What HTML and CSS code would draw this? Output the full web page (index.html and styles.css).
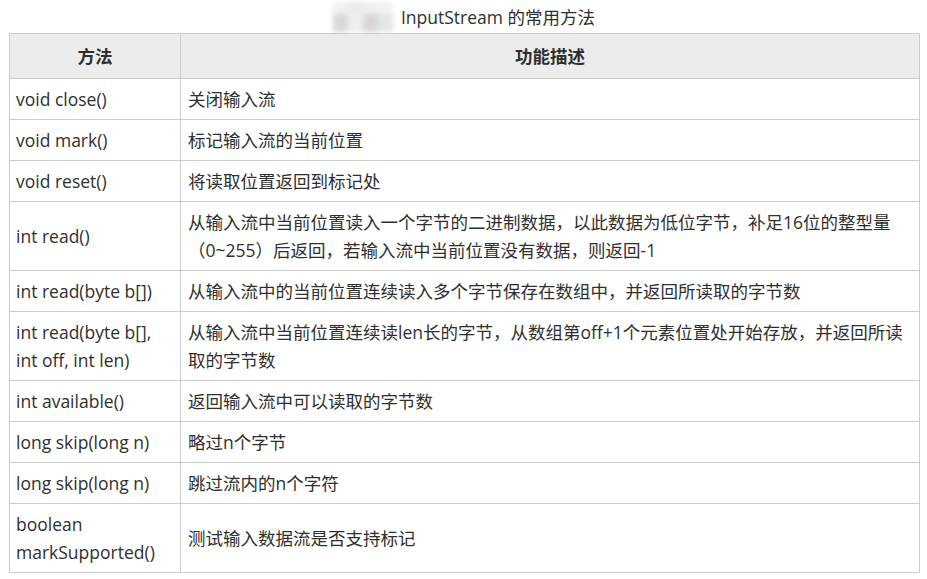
FILE: index.html
```html
<!DOCTYPE html>
<html lang="zh">
<head>
<meta charset="utf-8">
<link rel="stylesheet" href="styles.css">
</head>
<body>
<div class="caption">
  <span class="blur"><i class="b1"></i><i class="b2"></i><i class="b3"></i><i class="b4"></i></span>
  <span class="title">InputStream 的常用方法</span>
</div>
<table class="tbl">
  <colgroup><col class="c1"><col class="c2"></colgroup>
  <thead>
    <tr><th>方法</th><th>功能描述</th></tr>
  </thead>
  <tbody>
    <tr><td>void close()</td><td>关闭输入流</td></tr>
    <tr><td>void mark()</td><td>标记输入流的当前位置</td></tr>
    <tr><td>void reset()</td><td>将读取位置返回到标记处</td></tr>
    <tr class="tall"><td>int read()</td><td>从输入流中当前位置读入一个字节的二进制数据，以此数据为低位字节，补足16位的整型量（0~255）后返回，若输入流中当前位置没有数据，则返回-1</td></tr>
    <tr><td>int read(byte b[])</td><td>从输入流中的当前位置连续读入多个字节保存在数组中，并返回所读取的字节数</td></tr>
    <tr class="tall"><td>int read(byte b[],<br>int off, int len)</td><td>从输入流中当前位置连续读len长的字节，从数组第off+1个元素位置处开始存放，并返回所读取的字节数</td></tr>
    <tr><td>int available()</td><td>返回输入流中可以读取的字节数</td></tr>
    <tr><td>long skip(long n)</td><td>略过n个字节</td></tr>
    <tr><td>long skip(long n)</td><td>跳过流内的n个字符</td></tr>
    <tr class="last"><td>boolean<br>markSupported()</td><td>测试输入数据流是否支持标记</td></tr>
  </tbody>
</table>
</body>
</html>
```
FILE: styles.css
```css
html, body {
  margin: 0;
  padding: 0;
  background: #fff;
}
body {
  font-family: "Open Sans", "Noto Sans CJK SC", sans-serif;
  font-size: 17.5px;
  color: #2f2f2f;
  padding: 0 8px 0 9px;
}
.caption {
  height: 33px;
  display: flex;
  justify-content: center;
  align-items: center;
}
.blur {
  display: flex;
  height: 30px;
  margin-right: 8px;
  filter: blur(2.5px);
  opacity: 0.8;
}
.blur i {
  display: block;
  width: 15px;
  height: 30px;
}
.b1 { background: linear-gradient(#eceef0 40%, #d2d0ce 40%); }
.b2 { background: linear-gradient(#e4e6e8 40%, #eaecee 40%); }
.b3 { background: linear-gradient(#ecedef 40%, #d0cecc 40%); }
.b4 { background: linear-gradient(#eeeff1 40%, #dde0e2 40%); }
.title {
  font-size: 17.5px;
  color: #2f2f2f;
}
.tbl {
  border-collapse: collapse;
  width: 911px;
  table-layout: fixed;
}
.c1 { width: 171px; }
.tbl th, .tbl td {
  border: 1px solid #cccccc;
  line-height: 28px;
  padding: 6px;
  vertical-align: middle;
  text-align: left;
}
.tbl th {
  background: #ececec;
  font-weight: bold;
  text-align: center;
  height: 32px;
}
.tbl td:nth-child(2) {
  padding-left: 7px;
}
.tbl tbody tr td {
  height: 28px;
}
.tbl tbody tr.tall td {
  height: 56px;
}
```
